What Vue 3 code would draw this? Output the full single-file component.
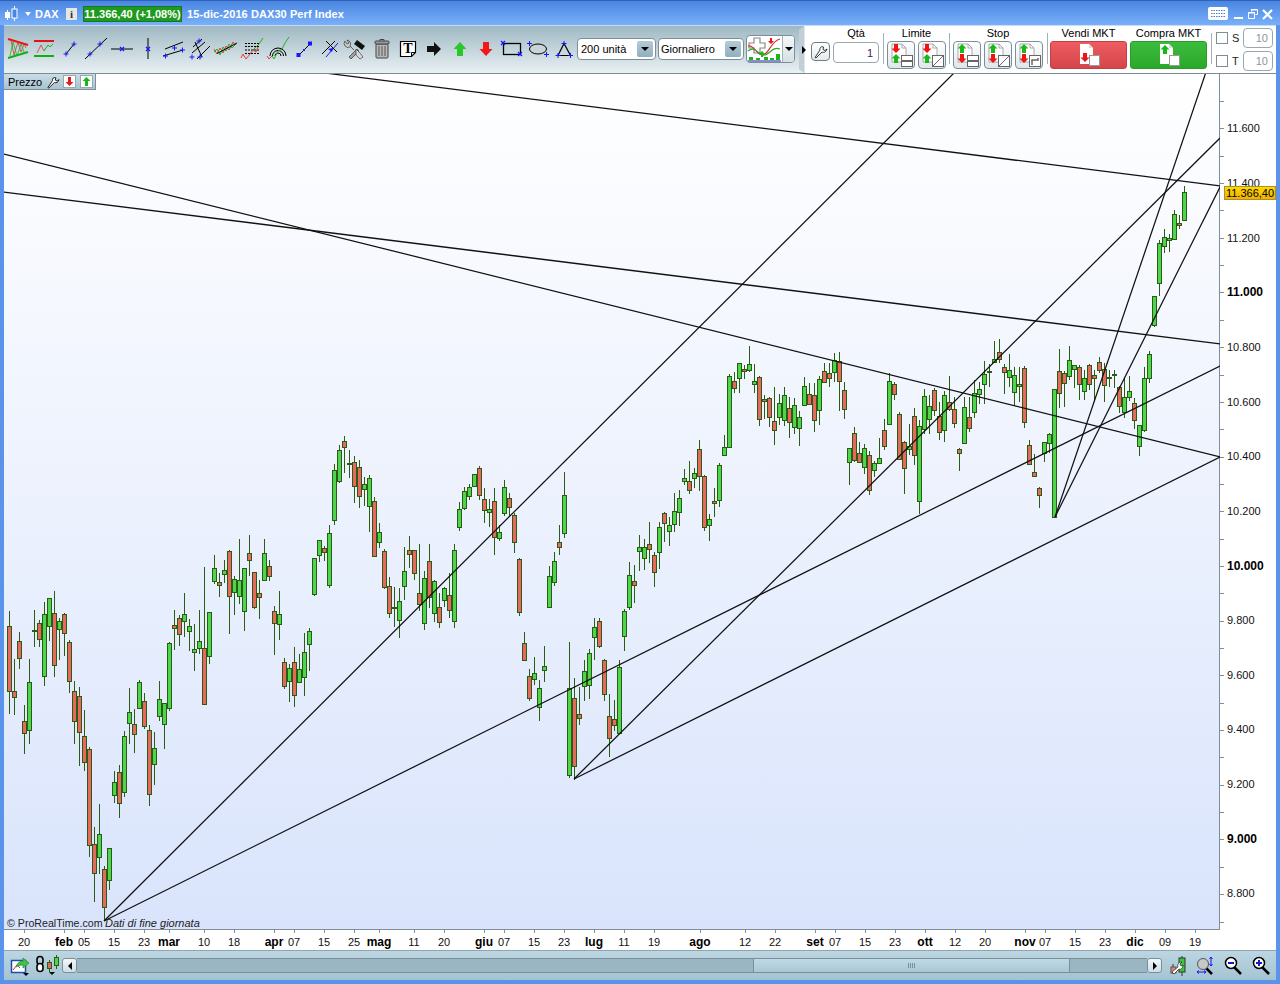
<template>
  <div class="window">
    <!-- Title bar -->
    <header class="titlebar">
      <svg class="title-candle" width="15" height="18" viewBox="0 0 15 18">
        <path d="M3.5 5v10" stroke="#fff" />
        <rect x="1" y="7" width="5" height="6" fill="#fff" />
        <path d="M10.5 1v15" stroke="#fff" />
        <rect x="8" y="4" width="5" height="9" fill="#4a86e0" stroke="#fff" />
      </svg>
      <span class="title-arrow"></span>
      <span class="title-name">DAX</span>
      <span class="info-box">i</span>
      <span class="price-box">11.366,40 (+1,08%)</span>
      <span class="title-text">15-dic-2016 DAX30 Perf Index</span>
      <div class="window-buttons">
        <svg width="20" height="15" viewBox="0 0 20 15">
          <rect width="20" height="13" y="1" rx="2" fill="#fff" />
          <path d="M3 4.5h14M3 7.5h14M3 10.5h14" stroke="#4a7fd8" stroke-dasharray="1.5 1" />
        </svg>
        <svg width="10" height="12" viewBox="0 0 10 12"><rect y="9" width="9" height="2" fill="#fff" /></svg>
        <svg width="10" height="12" viewBox="0 0 10 12">
          <path d="M3.5 3.5V1.5h6v5h-2M.5 4.5h6v6h-6z" fill="none" stroke="#fff" />
          <path d="M3 2h6M0 5h6" stroke="#fff" />
        </svg>
        <svg width="11" height="12" viewBox="0 0 11 12"><path d="M1 2l9 9M10 2l-9 9" stroke="#fff" stroke-width="2.2" /></svg>
      </div>
    </header>

    <!-- Toolbar -->
    <section class="toolbar">
      <div class="drawing-tools">
        <svg class="tool" viewBox="0 0 26 26">
          <path d="M3 3l20 6" stroke="#f01010" stroke-width="2" />
          <path d="M3 22l20-6" stroke="#10b010" stroke-width="2" />
          <path d="M6 4l3 15 4-13 3 10 3-8 2 4" fill="none" stroke="#c84040" stroke-width=".8" />
          <path d="M5 20l3-14 4 14 4-12 3 8" fill="none" stroke="#20b020" stroke-width=".8" />
        </svg>
        <svg class="tool" viewBox="0 0 26 26">
          <path d="M3 5h20" stroke="#e81010" stroke-width="2" />
          <path d="M3 20h20" stroke="#10b010" stroke-width="2" />
          <path d="M6 17l4-8 3 6" fill="none" stroke="#e05050" />
          <path d="M13 15l4-6 2 2 3-3" fill="none" stroke="#20b020" />
        </svg>
        <svg class="tool" viewBox="0 0 26 26">
          <path d="M9 18l8-10" stroke="#000" />
          <path d="M6.500 18h5M9 15.500v5M14.500 8h5M17 5.500v5" stroke="#1616ff" />
        </svg>
        <svg class="tool" viewBox="0 0 26 26">
          <path d="M2 23L24 2" stroke="#000" />
          <path d="M4.500 18h5M7 15.500v5M14.500 8h5M17 5.500v5" stroke="#1616ff" />
        </svg>
        <svg class="tool" viewBox="0 0 26 26">
          <path d="M2 13h22" stroke="#000" />
          <path d="M11 11l4 4M15 11l-4 4" stroke="#1616ff" stroke-width="1.300" />
        </svg>
        <svg class="tool" viewBox="0 0 26 26">
          <path d="M13 2v21" stroke="#000" />
          <path d="M11 11l4 4M15 11l-4 4" stroke="#1616ff" stroke-width="1.300" />
        </svg>
        <svg class="tool" viewBox="0 0 26 26">
          <path d="M4 13l18-7M2 20l20-6" stroke="#000" />
          <path d="M2 20h5M4.500 17.500v5M11 12h5M13.500 9.500v5M19 14h5M21.500 11.500v5" stroke="#1616ff" />
        </svg>
        <svg class="tool" viewBox="0 0 26 26">
          <path d="M6 11l9-8M5 17l13-11M10 23l13-13M8 6l7 15" stroke="#000" />
          <path d="M2.500 21h5M5 18.500v5M10.500 21h5M13 18.500v5M9.500 5h5M12 2.500v5" stroke="#1616ff" />
        </svg>
        <svg class="tool" viewBox="0 0 26 26">
          <path d="M1 13l3 5 3-6 3 5 3-7 3 4 4-8 2 3" fill="none" stroke="#d84040" />
          <path d="M1 16l3-3 3 6 3-8 3 4 3-7 3 4 4-4" fill="none" stroke="#20b020" />
          <path d="M4 17.500L24 7" stroke="#000" />
        </svg>
        <svg class="tool" viewBox="0 0 26 26">
          <path d="M6 7.500h14M6 10.500h14M6 14h14M6 17.500h14" stroke="#000" stroke-dasharray="2 1" />
          <path d="M2 22l2-4 3 5 4-5" fill="none" stroke="#e04040" />
          <path d="M11 18l3-4 3 2 2-5" fill="none" stroke="#e04040" />
          <path d="M14 14l4-4 2-2 4-6" fill="none" stroke="#20b020" />
        </svg>
        <svg class="tool" viewBox="0 0 26 26">
          <path d="M5 20a8 8 0 0 1 16 0M7.500 20a5.500 5.500 0 0 1 11 0M10 20a3 3 0 0 1 6 0" fill="none" stroke="#000" />
          <path d="M2 20l2 3 3-3" fill="none" stroke="#e04040" />
          <path d="M7 20l2 3" fill="none" stroke="#20b020" />
          <path d="M9 23l4-8 4-2 3-6 4-6" fill="none" stroke="#20b020" />
        </svg>
        <svg class="tool" viewBox="0 0 26 26">
          <path d="M8 19L19 8" stroke="#000" />
          <path d="M5.500 17h4v4h-4zM17 5.500h4v4h-4z" fill="#1616ff" />
          <path d="M12 13l2 2M14 13l-2 2" stroke="#1616ff" />
        </svg>
        <svg class="tool" viewBox="0 0 26 26">
          <path d="M5 18L18 5" stroke="#000" />
          <path d="M9 21L21 7" stroke="#1616ff" />
          <path d="M9 5l11 11" stroke="#000" />
          <path d="M11 13l4 3 1-4z" fill="#1616ff" />
        </svg>
        <svg class="tool" viewBox="0 0 26 26">
          <path d="M6 21l8-8 2 2-8 8z" fill="#a0a0a0" stroke="#333" stroke-width=".7" />
          <path d="M14 4l8 6-3 4-8-6z" fill="#111" />
          <path d="M11 14L7 10A4 4 0 0 0 4 4l2 3-2 1-2-3a4 4 0 0 0 5 6" fill="#ccc" stroke="#444" stroke-width=".8" />
          <path d="M13 13l4 4 3 4-3 2-4-4z" fill="#d8d8d8" stroke="#444" stroke-width=".7" />
        </svg>
        <svg class="tool" viewBox="0 0 26 26">
          <rect x="7" y="8" width="12" height="14" rx="1" fill="#b8b8b8" stroke="#444" />
          <path d="M10 10v10M13 10v10M16 10v10" stroke="#555" />
          <rect x="6" y="5" width="14" height="3" rx="1" fill="#999" stroke="#444" />
          <path d="M11 5V3.500h4V5" fill="none" stroke="#444" />
        </svg>
        <svg class="tool" viewBox="0 0 26 26">
          <path d="M5.500 5.500h15v11l-4 4h-11z" fill="#fff" stroke="#000" stroke-width="1.200" />
          <path d="M20.500 16.500h-4v4" fill="none" stroke="#000" />
          <text x="13" y="17" class="tool-t">T</text>
        </svg>
        <svg class="tool" viewBox="0 0 26 26">
          <path d="M6 10h7V6l7 7-7 7v-4H6z" fill="#111" />
        </svg>
        <svg class="tool" viewBox="0 0 26 26">
          <path d="M13 6l6.500 7H16v7h-6v-7H6.500z" fill="#28c828" />
        </svg>
        <svg class="tool" viewBox="0 0 26 26">
          <path d="M13 20l6.500-7H16V6h-6v7H6.500z" fill="#f01818" />
        </svg>
        <svg class="tool" viewBox="0 0 26 26">
          <rect x="4.500" y="7.500" width="17" height="11" fill="none" stroke="#000" stroke-width="1.300" />
          <path d="M2 5l4 4M6 5L2 9M19 16l4 4M23 16l-4 4" stroke="#1616ff" stroke-width="1.200" />
        </svg>
        <svg class="tool" viewBox="0 0 26 26">
          <ellipse cx="13" cy="13" rx="8.500" ry="5" fill="#c8d4d8" stroke="#000" />
          <path d="M2 7.500h5M4.500 5v5M19 18.500h5M21.500 16v5" stroke="#1616ff" />
        </svg>
        <svg class="tool" viewBox="0 0 26 26">
          <path d="M13 7.500L7 19.500h12.500z" fill="none" stroke="#000" stroke-width="1.200" />
          <path d="M10.500 7.500h5M13 5v5M4.500 19.500h5M7 17v5M17 19.500h5M19.500 17v5" stroke="#1616ff" />
        </svg>
      </div>

      <div class="select select-units">
        <span>200 unità</span><i class="select-arrow"></i>
      </div>
      <div class="select select-period">
        <span>Giornaliero</span><i class="select-arrow"></i>
      </div>
      <div class="chart-button">
        <svg width="35" height="26" viewBox="0 0 35 26">
          <path d="M7 2h6v5h5v5h-5v5H7v-5H2V7h5z" fill="#fff" stroke="#888" stroke-width="1.200" />
          <path d="M1 10c6-2 9 10 15 9s8-14 17-16" fill="none" stroke="#d83030" stroke-width="1.200" />
          <path d="M1 15c7-6 10 4 16 4s8-9 16-6" fill="none" stroke="#30a830" stroke-width="1.200" />
          <path d="M12 18l3-3 3 3h-2v3h-2v-3z" fill="#18b818" />
          <path d="M24 8l-3-3h2V2h2v3h2z" fill="#e81818" />
          <path d="M2 21h4v3H2zM9 22h4v2H9zM17 21h4v3h-4zM23 22h4v2h-4zM29 18h4v6h-4z" fill="#18b818" />
          <path d="M1 25h33" stroke="#1616a0" />
        </svg>
        <span class="chart-button-menu"><i class="arrow-down"></i></span>
      </div>

      <!-- Order panel -->
      <div class="order-panel">
        <i class="panel-arrow"></i>
        <button class="wrench-button">
          <svg width="15" height="15" viewBox="0 0 15 15">
            <path d="M2 13.500l1 .5 6-6c2 1 4 0 5-3l-2 1.500-2-1 .5-2.500C8 2 6.500 4 7 6z" fill="#fff" stroke="#222" stroke-width=".9" />
          </svg>
        </button>
        <div class="order-group qty-group">
          <div class="order-label">Qtà</div>
          <div class="qty-input">1</div>
        </div>
        <span class="separator"></span>
        <div class="order-group limit-group">
          <div class="order-label">Limite</div>
          <div class="order-buttons">
            <button v-for="btn in limitButtons" :key="btn.box" class="order-button">
              <svg width="26" height="26" viewBox="0 0 26 26">
                <path d="M4 2h10l4 4v14H4z" fill="#fff" stroke="#8a8a8a" stroke-width=".7" />
                <path d="M14 2v4h4" fill="none" stroke="#8a8a8a" stroke-width=".7" />
                <path :d="downArrow(8, 2)" fill="#ee1414" />
                <path :d="upArrow(8, 12)" fill="#18b818" />
                <rect x="13.500" y="13.500" width="11" height="11" fill="#fff" stroke="#666" />
                <path v-if="btn.box === 'bars'" d="M14 19h10" stroke="#666" stroke-width="2" />
                <path v-if="btn.box === 'diag'" d="M14 24L24 14" stroke="#666" />
              </svg>
            </button>
          </div>
        </div>
        <span class="separator"></span>
        <div class="order-group">
          <div class="order-label">Stop</div>
          <div class="order-buttons">
            <button v-for="btn in stopButtons" :key="btn.box" class="order-button">
              <svg width="26" height="26" viewBox="0 0 26 26">
                <path d="M4 2h10l4 4v14H4z" fill="#fff" stroke="#8a8a8a" stroke-width=".7" />
                <path d="M14 2v4h4" fill="none" stroke="#8a8a8a" stroke-width=".7" />
                <path :d="upArrow(8, 2)" fill="#18b818" />
                <path :d="downArrow(8, 12)" fill="#ee1414" />
                <rect x="13.500" y="13.500" width="11" height="11" fill="#fff" stroke="#666" />
                <path v-if="btn.box === 'bars'" d="M14 19h10" stroke="#666" stroke-width="2" />
                <path v-if="btn.box === 'diag'" d="M14 24L24 14" stroke="#666" />
                <path v-if="btn.box === 'step'" d="M16 23v-5h6v-2" fill="none" stroke="#666" stroke-width="1.500" />
              </svg>
            </button>
          </div>
        </div>
        <span class="separator"></span>
        <div class="order-group sell-group">
          <div class="order-label">Vendi MKT</div>
          <button class="market-button sell">
            <svg width="24" height="26" viewBox="0 0 24 26">
              <path d="M3 2h9l4 4v16H3z" fill="#fff" />
              <path d="M12 2v4h4" fill="#ddd" />
              <path :d="downArrow(8, 11)" fill="#ee1414" />
              <rect x="12.500" y="13.500" width="10" height="10" fill="#fff" stroke="#999" />
            </svg>
          </button>
        </div>
        <div class="order-group compra-group">
          <div class="order-label">Compra MKT</div>
          <button class="market-button buy">
            <svg width="24" height="26" viewBox="0 0 24 26">
              <path d="M3 2h9l4 4v16H3z" fill="#fff" />
              <path d="M12 2v4h4" fill="#ddd" />
              <path :d="upArrow(8, 3)" fill="#18b818" />
              <rect x="12.500" y="13.500" width="10" height="10" fill="#fff" stroke="#999" />
            </svg>
          </button>
        </div>
        <span class="separator"></span>
        <div class="bracket-grid">
          <i class="checkbox"></i><span>S</span><div class="bracket-input">10</div>
          <i class="checkbox"></i><span>T</span><div class="bracket-input">10</div>
        </div>
      </div>
    </section>

    <!-- Chart and price axis -->
    <section class="chart-row">
      <div class="plot">
        <svg class="plot-svg" width="1216" height="856" viewBox="4 74 1216 856">
          <g shape-rendering="crispEdges">
            <g v-for="c in candles" :key="c.x">
              <path :d="`M${c.x} ${c.wt}V${c.wb}`" stroke="#2a5c12" />
              <rect
                :x="c.x - 2"
                :y="c.bt + 0.5"
                width="4"
                :height="c.h"
                :fill="c.up ? '#4dd64d' : '#e8685f'"
                stroke="#2a5c12"
              />
            </g>
          </g>
          <path
            v-for="(l, idx) in trendLines"
            :key="idx"
            :d="`M${l[0]} ${l[1]}L${l[2]} ${l[3]}`"
            stroke="#111"
            stroke-width="1.25"
            fill="none"
          />
          <text x="7" y="927" class="plot-note plot-note-copy">© ProRealTime.com</text>
          <text x="105" y="927" class="plot-note plot-note-italic">Dati di fine giornata</text>
        </svg>
        <div class="price-tab">
          <span>Prezzo</span>
          <svg class="tab-wrench" width="14" height="14" viewBox="0 0 15 15">
            <path d="M2 13.500l1 .5 6-6c2 1 4 0 5-3l-2 1.500-2-1 .5-2.500C8 2 6.500 4 7 6z" fill="#fff" stroke="#111" />
          </svg>
          <svg width="13" height="13" viewBox="0 0 13 13">
            <rect x=".5" y=".5" width="12" height="12" fill="#fff" stroke="#9aa" />
            <path d="M6.500 11l-4-4H5V2h3v5h2.500z" fill="#e81818" />
          </svg>
          <svg width="13" height="13" viewBox="0 0 13 13">
            <rect x=".5" y=".5" width="12" height="12" fill="#fff" stroke="#9aa" />
            <path d="M6.500 2l4 4H8v5H5V6H2.500z" fill="#18b818" />
          </svg>
        </div>
      </div>
      <div class="price-axis">
        <svg width="56" height="856" viewBox="1220 74 56 856">
          <path
            v-for="y in priceTicks"
            :key="y"
            :d="`M1220 ${y}h4`"
            stroke="#7f8f99"
            shape-rendering="crispEdges"
          />
          <text
            v-for="p in priceLabels"
            :key="p.text"
            x="1227"
            :y="p.y + 4"
            :class="p.bold ? 'axis-bold' : 'axis-text'"
          >{{ p.text }}</text>
        </svg>
        <div class="last-price">11.366,40</div>
      </div>
    </section>

    <!-- Time axis -->
    <section class="time-axis">
      <svg width="1272" height="20" viewBox="4 930 1272 20">
        <path
          v-for="t in timeLabels"
          :key="t.x"
          :d="`M${t.x + 0.5} 930v3`"
          stroke="#7f8f99"
          shape-rendering="crispEdges"
        />
        <text
          v-for="t in timeLabels"
          :key="t.x"
          :x="t.x"
          y="946"
          text-anchor="middle"
          :class="t.bold ? 'month-text' : 'axis-text'"
        >{{ t.text }}</text>
      </svg>
    </section>

    <!-- Bottom bar -->
    <footer class="bottombar">
      <svg class="bar-icon-left" width="20" height="20" viewBox="0 0 20 20">
        <rect x="1.500" y="4.500" width="14" height="12" fill="#fff" stroke="#1a4fb0" stroke-width="1.500" />
        <path d="M3 14l4-5 3 3" fill="none" stroke="#d83030" />
        <path d="M6 11c1-4 4-6 7-6V2l6 5-6 5V9c-3 0-5 1-7 2z" fill="#44c04a" stroke="#2a8a30" stroke-width=".7" />
        <path d="M13 17h6l-3 3z" fill="#000" />
      </svg>
      <svg class="bar-icon-link" width="25" height="22" viewBox="0 0 25 22">
        <rect x="2" y="1.500" width="6" height="8" rx="3" fill="none" stroke="#000" stroke-width="1.600" />
        <rect x="2" y="8.500" width="6" height="8" rx="3" fill="#fff" stroke="#000" stroke-width="1.600" />
        <path d="M14.500 5v12" stroke="#2a5c12" />
        <rect x="12.500" y="7.500" width="4" height="6" fill="#e8685f" stroke="#2a5c12" />
        <path d="M21.500 0v14" stroke="#2a5c12" />
        <rect x="19.500" y="2.500" width="4" height="8" fill="#4dd64d" stroke="#2a5c12" />
        <path d="M14 17h6l-3 3z" fill="#000" />
      </svg>
      <div class="scrollbar">
        <button class="scroll-btn"><i class="arrow-left"></i></button>
        <div class="scroll-track"><div class="scroll-thumb"><span class="thumb-grip"></span></div></div>
        <button class="scroll-btn"><i class="arrow-right"></i></button>
      </div>
      <div class="zoom-icons">
        <svg width="16" height="22" viewBox="0 0 16 22">
          <path d="M3 9v10M12 1v20" stroke="#333" />
          <rect x="1" y="12" width="5" height="6" fill="#e8807a" stroke="#555" />
          <rect x="9" y="3" width="6" height="14" fill="#3cc83c" stroke="#333" />
          <path d="M2 17l6-5c-1-3 1-5 4-5l-2 2 1 2 2-1c0 3-2 5-4 4l-5 5z" fill="#fff" stroke="#222" stroke-width=".7" />
        </svg>
        <svg width="18" height="20" viewBox="0 0 18 20">
          <path d="M10 12l6 6" stroke="#000" stroke-width="2.500" />
          <circle cx="7" cy="8" r="5.500" fill="#c8c8c8" stroke="#555" />
          <path d="M15 1v9M13.500 3L15 1l1.500 2M13.500 8l1.500 2 1.500-2M1 16h9M3 14.500L1 16l2 1.500M8 14.500l2 1.500-2 1.500" fill="none" stroke="#1616ff" />
        </svg>
        <svg width="18" height="20" viewBox="0 0 18 20">
          <path d="M10 11l7 7" stroke="#000" stroke-width="2.500" />
          <circle cx="7" cy="7" r="5.500" fill="#fff" stroke="#000" stroke-width="1.500" />
          <path d="M4 7h6" stroke="#1616c0" stroke-width="2" />
        </svg>
        <svg width="18" height="20" viewBox="0 0 18 20">
          <path d="M10 11l7 7" stroke="#000" stroke-width="2.500" />
          <circle cx="7" cy="7" r="5.500" fill="#fff" stroke="#000" stroke-width="1.500" />
          <path d="M4 7h6M7 4v6" stroke="#1616c0" stroke-width="2" />
        </svg>
      </div>
    </footer>
  </div>
</template>

<script setup>
// wick top, body top, body bottom, wick bottom (page pixels), g = green, r = red
const rawCandles = [
  [611,626,691,714,'r'],[659,691,697,715,'r'],[632,641,658,669,'r'],[705,721,733,754,'r'],[659,682,730,744,'g'],
  [610,630,631,647,'g'],[620,623,639,647,'r'],[602,614,676,686,'g'],[598,598,626,641,'g'],[591,613,665,677,'r'],
  [618,621,629,660,'g'],[613,614,633,656,'r'],[640,642,681,693,'r'],[681,691,721,744,'r'],[687,696,732,766,'r'],
  [710,736,762,771,'r'],[747,749,845,857,'r'],[827,844,873,902,'r'],[804,834,857,874,'g'],[866,869,907,920,'r'],
  [848,848,880,890,'g'],[771,782,795,803,'g'],[765,772,803,818,'r'],[731,736,792,797,'g'],[688,712,723,744,'g'],
  [709,724,734,753,'r'],[680,682,708,709,'g'],[693,701,726,729,'r'],[725,730,794,806,'r'],[732,748,764,785,'g'],
  [681,699,716,721,'g'],[703,703,724,749,'g'],[642,643,708,711,'g'],[610,625,628,650,'r'],[615,618,634,646,'r'],
  [593,614,621,637,'g'],[619,626,631,651,'g'],[624,649,652,671,'g'],[610,641,648,654,'g'],[567,648,704,704,'r'],
  [612,612,656,664,'g'],[555,568,581,584,'g'],[573,582,585,597,'r'],[560,570,574,583,'g'],[550,551,596,634,'r'],
  [576,579,592,615,'g'],[539,580,596,604,'g'],[568,568,611,631,'g'],[535,553,560,576,'r'],[572,572,607,609,'r'],
  [580,593,597,619,'r'],[539,553,580,581,'g'],[560,566,576,581,'r'],[606,611,623,655,'r'],[591,614,624,640,'g'],
  [658,662,686,689,'r'],[664,668,681,702,'g'],[647,662,695,707,'r'],[654,669,682,683,'g'],[633,652,677,696,'g'],
  [628,631,644,671,'g'],[558,558,594,596,'g'],[540,540,555,562,'g'],[546,548,552,561,'r'],[525,533,585,588,'g'],
  [464,470,520,525,'g'],[445,450,481,483,'g'],[436,441,447,473,'r'],[450,463,464,478,'g'],[456,462,486,503,'r'],
  [460,467,496,508,'r'],[477,484,489,506,'g'],[475,478,506,532,'g'],[497,501,556,556,'r'],[523,532,542,548,'g'],
  [549,551,587,589,'r'],[577,586,613,618,'r'],[587,607,608,627,'g'],[588,601,620,638,'g'],[547,571,586,600,'g'],
  [536,550,554,568,'r'],[550,550,573,580,'r'],[544,593,604,611,'r'],[571,578,623,630,'g'],[544,561,597,608,'r'],
  [580,581,613,622,'g'],[593,607,622,628,'r'],[587,588,600,607,'g'],[573,595,610,618,'r'],[544,550,621,628,'g'],
  [502,509,527,531,'g'],[487,491,508,510,'g'],[484,487,496,500,'g'],[474,474,486,487,'g'],[466,468,495,500,'r'],
  [488,499,510,523,'r'],[499,509,512,527,'g'],[488,501,537,555,'r'],[525,532,538,541,'g'],[480,487,513,516,'g'],
  [493,498,507,517,'r'],[513,515,542,553,'r'],[558,559,612,616,'r'],[632,643,660,660,'r'],[669,676,698,701,'r'],
  [657,673,679,685,'g'],[680,688,707,721,'g'],[646,666,670,682,'g'],[566,576,607,607,'g'],[552,561,582,586,'g'],
  [525,542,547,555,'r'],[472,495,533,538,'g'],[642,688,775,778,'g'],[678,698,766,780,'r'],[687,714,718,725,'r'],
  [660,671,686,701,'g'],[649,653,685,699,'g'],[618,627,637,660,'g'],[618,621,646,648,'r'],[659,660,694,701,'r'],
  [694,716,738,757,'r'],[700,719,725,731,'r'],[660,667,733,733,'g'],[609,611,636,651,'g'],[562,575,607,610,'g'],
  [565,581,585,603,'r'],[535,547,551,571,'g'],[539,547,558,570,'g'],[522,544,549,563,'r'],[552,555,572,587,'r'],
  [522,527,552,569,'g'],[512,513,523,542,'r'],[517,525,531,546,'g'],[493,511,524,532,'g'],[490,498,512,526,'g'],
  [469,478,481,485,'g'],[461,481,490,494,'r'],[468,473,478,488,'g'],[440,449,476,491,'r'],[475,476,527,531,'r'],
  [514,519,525,541,'g'],[488,501,503,517,'r'],[463,465,500,507,'g'],[435,447,455,456,'g'],[374,376,447,447,'g'],
  [372,381,388,393,'r'],[363,363,378,393,'g'],[365,369,371,379,'r'],[346,364,370,372,'g'],[364,381,384,393,'g'],
  [376,377,419,426,'r'],[395,399,401,419,'r'],[397,398,417,427,'r'],[387,421,430,445,'r'],[394,403,417,425,'g'],
  [387,395,420,426,'g'],[397,408,422,438,'r'],[398,405,427,434,'g'],[411,417,428,446,'g'],[377,386,405,405,'g'],
  [383,394,404,404,'r'],[383,395,420,432,'r'],[376,379,410,425,'g'],[363,371,382,382,'r'],[363,373,378,387,'r'],
  [353,360,372,382,'g'],[352,361,381,411,'r'],[382,390,409,419,'r'],[448,448,462,485,'g'],[427,433,460,462,'r'],
  [442,453,462,463,'r'],[444,448,467,474,'g'],[451,455,490,495,'r'],[461,463,470,477,'g'],[438,458,463,464,'g'],
  [419,430,446,450,'r'],[373,381,424,424,'g'],[382,384,394,400,'r'],[412,414,459,459,'r'],[441,442,468,494,'r'],
  [424,446,449,455,'g'],[408,416,455,465,'r'],[420,426,501,514,'g'],[389,396,429,434,'g'],[395,406,419,434,'g'],
  [388,390,410,416,'r'],[402,416,432,440,'r'],[391,395,430,442,'g'],[376,402,409,411,'r'],[397,409,423,428,'r'],
  [448,449,453,471,'r'],[397,407,443,443,'g'],[397,417,428,432,'r'],[380,393,412,418,'g'],[382,389,394,404,'g'],
  [361,374,384,404,'g'],[364,371,371,387,'g'],[341,359,362,362,'g'],[339,352,359,363,'r'],[364,367,372,394,'r'],
  [354,370,377,387,'g'],[367,375,392,406,'g'],[367,384,386,402,'g'],[366,368,422,428,'r'],[440,445,464,465,'r'],
  [454,472,476,476,'r'],[487,488,495,508,'r'],[442,442,453,462,'g'],[433,434,443,453,'g'],[389,389,517,518,'g'],
  [349,371,393,408,'r'],[371,373,383,407,'r'],[346,360,376,380,'g'],[365,365,369,388,'g'],[365,367,384,400,'r'],
  [370,378,391,400,'g'],[364,365,384,390,'r'],[370,375,378,402,'r'],[357,362,370,373,'r'],[363,369,385,402,'r'],
  [370,377,377,387,'g'],[370,374,374,388,'g'],[386,387,406,413,'r'],[377,397,412,418,'g'],[376,391,397,401,'g'],
  [398,403,420,429,'r'],[425,425,446,456,'g'],[367,378,430,432,'g'],[351,354,378,383,'g'],[296,296,325,327,'g'],
  [240,243,283,296,'g'],[229,237,246,253,'g'],[234,238,240,252,'g'],[210,214,239,239,'g'],[215,223,225,229,'r'],
  [186,192,220,220,'g'],
]

const candles = rawCandles.map((c, i) => ({
  x: 9.5 + i * 5,
  wt: c[0],
  bt: c[1],
  h: Math.max(c[2] - c[1], 1),
  wb: c[3],
  up: c[4] === 'g',
}))

const trendLines = [
  [325, 73, 1220, 186],
  [4, 154, 1220, 457],
  [4, 192, 1220, 344],
  [104, 921, 955, 72],
  [104, 921, 1220, 366],
  [574, 779, 1220, 457],
  [574, 779, 1220, 138],
  [1055, 517, 1206, 72],
  [1055, 517, 1220, 187],
]

// 200 points every 54.7px, the axis has a smaller tick every 100
const priceLabels = [
  { text: '11.600', y: 128 },
  { text: '11.400', y: 183 },
  { text: '11.200', y: 238 },
  { text: '11.000', y: 292, bold: true },
  { text: '10.800', y: 347 },
  { text: '10.600', y: 402 },
  { text: '10.400', y: 456 },
  { text: '10.200', y: 511 },
  { text: '10.000', y: 566, bold: true },
  { text: '9.800', y: 620 },
  { text: '9.600', y: 675 },
  { text: '9.400', y: 729 },
  { text: '9.200', y: 784 },
  { text: '9.000', y: 839, bold: true },
  { text: '8.800', y: 893 },
]

const priceTicks = []
for (let k = 0; k < 31; k++) {
  priceTicks.push(Math.round(101 + k * 27.35) + 0.5)
}

const timeLabels = [
  [24, '20'], [64, 'feb', 1], [84, '05'], [114, '15'], [144, '23'], [169, 'mar', 1], [204, '10'], [234, '18'],
  [274, 'apr', 1], [294, '07'], [324, '15'], [354, '25'], [379, 'mag', 1], [414, '11'], [444, '20'], [484, 'giu', 1],
  [504, '07'], [534, '15'], [564, '23'], [594, 'lug', 1], [624, '11'], [654, '19'], [700, 'ago', 1], [745, '12'],
  [775, '22'], [815, 'set', 1], [835, '07'], [865, '15'], [895, '23'], [925, 'ott', 1], [955, '12'], [985, '20'],
  [1025, 'nov', 1], [1045, '07'], [1075, '15'], [1105, '23'], [1135, 'dic', 1], [1165, '09'], [1195, '19'],
].map(([x, text, bold]) => ({ x, text, bold: !!bold }))

const limitButtons = [{ box: 'bars' }, { box: 'diag' }]
const stopButtons = [{ box: 'bars' }, { box: 'diag' }, { box: 'step' }]

function upArrow(cx, y) {
  return `M${cx} ${y}l4.500 4.500H${cx + 2}V${y + 9}H${cx - 2}V${y + 4.5}H${cx - 4.5}z`
}

function downArrow(cx, y) {
  return `M${cx} ${y + 9}l4.500-4.500H${cx + 2}V${y}H${cx - 2}V${y + 4.5}H${cx - 4.5}z`
}
</script>

<style>
html,
body {
  margin: 0;
  background: #5a93ea;
}
</style>

<style scoped>
* {
  box-sizing: border-box;
}

.window {
  width: 1280px;
  height: 984px;
  overflow: hidden;
  display: flex;
  flex-direction: column;
  padding: 0 4px 4px;
  background: #5a93ea;
  font-family: 'Liberation Sans', Arial, sans-serif;
  font-size: 11px;
  color: #000;
}

button {
  padding: 0;
  margin: 0;
  font: inherit;
}

/* Title bar */
.titlebar {
  height: 25px;
  margin: 0 -4px;
  padding: 1px 7px 0 4px;
  display: flex;
  align-items: center;
  background: linear-gradient(#4a86e0, #7ab0fa);
  border-top: 1px solid #2f62c0;
  color: #fff;
  font-weight: bold;
}

.title-candle {
  margin-right: 6px;
}

.title-arrow {
  width: 0;
  height: 0;
  border: 3.5px solid transparent;
  border-top: 4px solid #fff;
  border-bottom: 0;
  margin-right: 4px;
}

.title-name {
  width: 31px;
  letter-spacing: 0.2px;
}

.info-box {
  width: 11px;
  height: 12px;
  margin-right: 6px;
  background: #e6e6e6;
  color: #333;
  text-align: center;
  line-height: 12px;
  font-family: 'Liberation Serif', serif;
}

.price-box {
  width: 99px;
  height: 16px;
  line-height: 15px;
  text-align: center;
  background: #1f9a1f;
  border: 1px solid #0e7a2a;
  margin-right: 5px;
  white-space: nowrap;
}

.title-text {
  letter-spacing: 0.08px;
}

.window-buttons {
  margin-left: auto;
  display: flex;
  align-items: center;
  gap: 4px;
}

.window-buttons svg:first-child {
  margin-right: 2px;
}

/* Toolbar */
.toolbar {
  height: 49px;
  display: flex;
  align-items: center;
  padding: 0 0 1px 1px;
  background: linear-gradient(#9fb8c3, #e9f1f4);
  border-top: 1px solid #c8dcf2;
  border-bottom: 1px solid #7c8c94;
}

.drawing-tools {
  display: flex;
}

.tool {
  width: 26px;
  height: 26px;
  display: block;
}

.tool-t {
  font-family: 'Liberation Serif', serif;
  font-weight: bold;
  font-size: 14px;
  text-anchor: middle;
}

.select {
  height: 22px;
  background: #fff;
  border: 1px solid #7b8f99;
  border-radius: 4px;
  display: flex;
  align-items: center;
  justify-content: space-between;
  padding: 0 2px 0 3px;
}

.select-units {
  width: 79px;
  margin-right: 2px;
}

.select-period {
  width: 86px;
  margin-right: 2px;
  padding-left: 2px;
}

.select-arrow {
  width: 16px;
  height: 16px;
  background: linear-gradient(#b4cbd6, #8fb0be);
  border-radius: 2px;
  position: relative;
}

.select-arrow::after,
.arrow-down {
  content: '';
  display: block;
  width: 0;
  height: 0;
  border: 4px solid transparent;
  border-top: 4px solid #000;
  border-bottom: 0;
}

.select-arrow::after {
  margin: 6px 0 0 4px;
}

.chart-button {
  width: 49px;
  height: 28px;
  background: #fff;
  border: 1px solid #7b8f99;
  border-radius: 4px;
  display: flex;
  align-items: center;
  overflow: hidden;
}

.chart-button-menu {
  flex: 1;
  align-self: stretch;
  display: flex;
  align-items: center;
  justify-content: center;
  background: linear-gradient(#f5f8f9, #d5e0e5);
  border-left: 1px solid #9fb0b8;
}

/* Order panel */
.order-panel {
  margin: 0 0 -1px 4px;
  flex: 1;
  align-self: stretch;
  display: flex;
  padding-left: 3px;
  background: linear-gradient(to right, #c2cfd6 0, #c2cfd6 5px, #fff 6px);
  clip-path: polygon(5px 0, 100% 0, 100% 100%, 5px 100%, 0 92%, 0 8%);
}

.panel-arrow {
  width: 0;
  height: 0;
  align-self: center;
  border: 4px solid transparent;
  border-left: 4px solid #000;
  border-right: 0;
  margin-right: 5px;
}

.wrench-button {
  width: 19px;
  height: 19px;
  margin-top: 16px;
  margin-right: 3px;
  display: flex;
  align-items: center;
  justify-content: center;
  background: linear-gradient(#fff, #e4ebee);
  border: 1px solid #6f7f87;
  border-radius: 4px;
}

.order-group {
  display: flex;
  flex-direction: column;
  padding-top: 1px;
}

.order-label {
  height: 14px;
  line-height: 13px;
  text-align: center;
  white-space: nowrap;
}

.qty-group {
  width: 46px;
}

.limit-group {
  margin-right: -1px;
}

.sell-group {
  margin-left: -1px;
}

.qty-input {
  height: 21px;
  margin-top: 1px;
  padding-right: 5px;
  line-height: 20px;
  text-align: right;
  color: #402060;
  background: #fff;
  border: 1px solid #9aa8b0;
  border-radius: 4px;
}

.separator {
  width: 1px;
  height: 31px;
  margin: 7px 3px 0 4px;
  background: #9fb0b8;
}

.order-buttons {
  display: flex;
  gap: 3px;
}

.order-button {
  width: 28px;
  height: 28px;
  display: flex;
  align-items: center;
  justify-content: center;
  background: linear-gradient(#fff, #dfe7ea);
  border: 1px solid #7b8f99;
  border-radius: 4px;
}

.market-button {
  width: 77px;
  height: 28px;
  display: flex;
  align-items: center;
  justify-content: center;
  border-radius: 3px;
}

.compra-group {
  margin-left: 3px;
}

.sell {
  background: linear-gradient(#ee5c60, #d4454a);
  border: 1px solid #c04048;
}

.buy {
  background: linear-gradient(#3cbc3c, #2aa82a);
  border: 1px solid #2c9a2c;
}

.bracket-grid {
  display: grid;
  grid-template-columns: 12px 15px 30px;
  grid-template-rows: 20px 20px;
  column-gap: 0;
  row-gap: 3px;
  margin: 2px 0 0 1px;
  align-items: center;
  color: #222;
}

.bracket-grid span {
  padding-left: 4px;
}

.checkbox {
  width: 12px;
  height: 12px;
  border: 1px solid #7b8f99;
  background: #fff;
}

.bracket-input {
  height: 20px;
  line-height: 19px;
  padding-right: 4px;
  text-align: right;
  color: #8a969c;
  border: 1px solid #9aa8b0;
  border-radius: 4px;
}

/* Chart */
.chart-row {
  height: 856px;
  display: flex;
  background: #fff;
}

.plot {
  width: 1216px;
  position: relative;
  background: linear-gradient(#fff, #d9e4fc);
  border-right: 1px solid #7f8f99;
  border-bottom: 1px solid #7f8f99;
}

.plot-svg {
  display: block;
  position: absolute;
  top: 0;
  left: 0;
}

.plot-note {
  font-size: 11px;
  fill: #222;
}

.plot-note-copy {
  font-size: 10.65px;
}

.plot-note-italic {
  font-style: italic;
}

.price-tab {
  position: absolute;
  top: 0;
  left: 0;
  width: 92px;
  height: 16px;
  display: flex;
  align-items: center;
  gap: 4px;
  padding-left: 4px;
  background: linear-gradient(#c9dde6, #a7c4d1);
  border-right: 1px solid #7f8f99;
  border-bottom: 1px solid #7f8f99;
  font-size: 11px;
}

.price-tab span {
  width: 34px;
}

.tab-wrench {
  margin-right: -1px;
}

.price-axis {
  width: 56px;
  position: relative;
}

.price-axis svg {
  display: block;
}

.axis-text {
  font-size: 11px;
  fill: #111;
}

.axis-bold {
  font-size: 12px;
  font-weight: bold;
  fill: #000;
}

.month-text {
  font-size: 12px;
  font-weight: bold;
  fill: #000;
}

.last-price {
  position: absolute;
  left: 4px;
  top: 112px;
  width: 52px;
  height: 14px;
  line-height: 13px;
  text-align: center;
  background: linear-gradient(#ffd900, #f0b000);
  border: 1px solid #a89030;
  font-size: 11px;
}

.time-axis {
  height: 20px;
  background: #fff;
}

.time-axis svg {
  display: block;
}

/* Bottom bar */
.bottombar {
  height: 30px;
  display: flex;
  align-items: center;
  padding-left: 6px;
  background: linear-gradient(#bcd6e2, #a4c3d1);
  border-top: 1px solid #8ea5b0;
}

.bar-icon-left {
  margin-right: 5px;
}

.bar-icon-link {
  margin-right: 2px;
}

.scrollbar {
  width: 1100px;
  height: 15px;
  display: flex;
}

.scroll-btn {
  width: 15px;
  height: 15px;
  display: flex;
  align-items: center;
  justify-content: center;
  background: linear-gradient(#f4f8fa, #cddde4);
  border: 1px solid #7b8f99;
  border-radius: 3px;
}

.arrow-left,
.arrow-right {
  width: 0;
  height: 0;
  border: 4px solid transparent;
}

.arrow-left {
  border-right: 4px solid #000;
  border-left: 0;
}

.arrow-right {
  border-left: 4px solid #000;
  border-right: 0;
}

.scroll-track {
  flex: 1;
  background: #9ab6c2;
  border-top: 1px solid #7b8f99;
  border-bottom: 1px solid #7b8f99;
  padding-left: 676px;
  padding-right: 77px;
}

.scroll-thumb {
  height: 100%;
  background: linear-gradient(#c0dae5, #a9c7d4);
  border-left: 1px solid #7b8f99;
  border-right: 1px solid #7b8f99;
  display: flex;
  align-items: center;
  justify-content: center;
}

.thumb-grip {
  width: 8px;
  height: 5px;
  background: repeating-linear-gradient(to right, #7b8f99 0, #7b8f99 1px, transparent 1px, transparent 2px);
}

.zoom-icons {
  display: flex;
  align-items: center;
  gap: 10px;
  margin-left: 8px;
}
</style>
